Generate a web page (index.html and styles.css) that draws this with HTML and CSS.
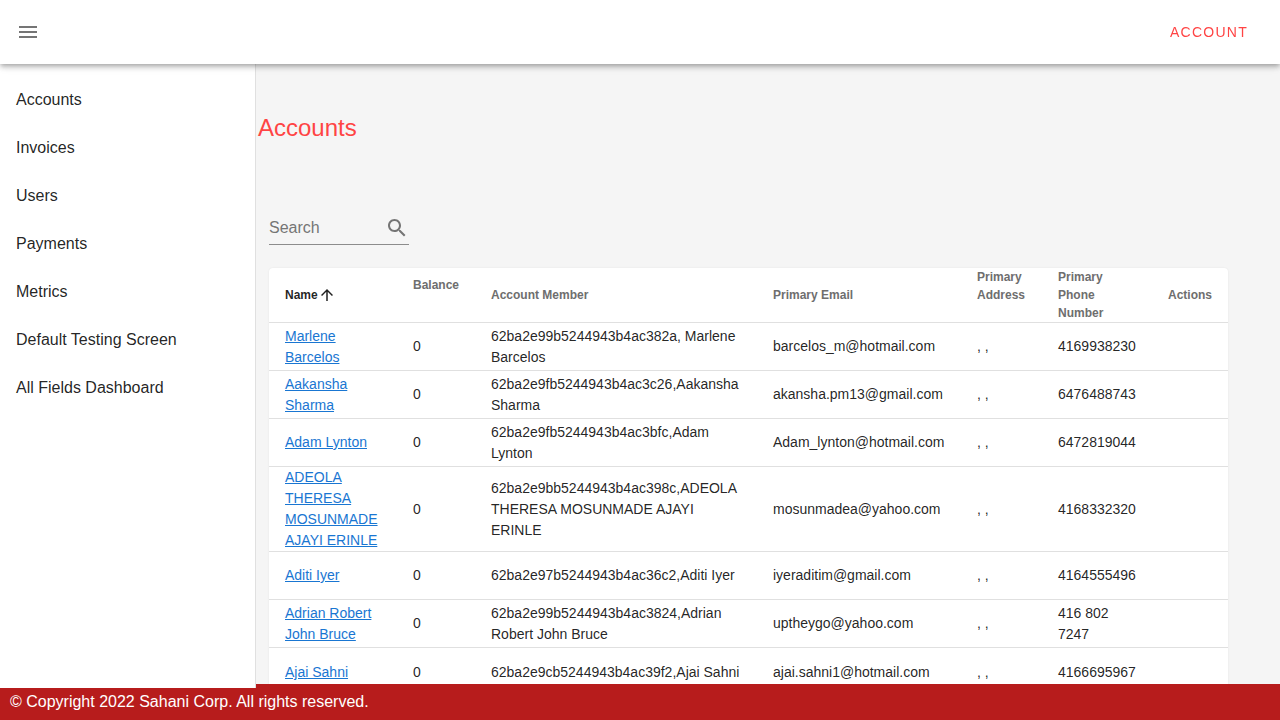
FILE: index.html
```html
<!DOCTYPE html>
<html lang="en">
<head>
<meta charset="utf-8">
<title>Accounts</title>
<link rel="stylesheet" href="styles.css">
</head>
<body>
<header class="appbar">
  <button class="menu-btn" aria-label="menu"><svg viewBox="0 0 24 24" width="24" height="24"><path d="M3 18h18v-2H3v2zm0-5h18v-2H3v2zm0-7v2h18V6H3z"/></svg></button>
  <a class="account-btn">ACCOUNT</a>
</header>
<div class="shell">
  <nav class="drawer">
    <a class="nav-item">Accounts</a>
    <a class="nav-item">Invoices</a>
    <a class="nav-item">Users</a>
    <a class="nav-item">Payments</a>
    <a class="nav-item">Metrics</a>
    <a class="nav-item">Default Testing Screen</a>
    <a class="nav-item">All Fields Dashboard</a>
  </nav>
  <main class="main">
    <h1 class="title">Accounts</h1>
    <div class="search">
      <span class="search-label">Search</span>
      <svg class="search-icon" viewBox="0 0 24 24" width="24" height="24"><path d="M15.5 14h-.79l-.28-.27C15.41 12.59 16 11.11 16 9.5 16 5.91 13.09 3 9.5 3S3 5.91 3 9.5 5.91 16 9.5 16c1.61 0 3.09-.59 4.23-1.57l.27.28v.79l5 4.99L20.49 19l-4.99-5zm-6 0C7.01 14 5 11.99 5 9.5S7.01 5 9.5 5 14 7.01 14 9.5 11.99 14 9.5 14z"/></svg>
    </div>
    <div class="card">
      <table class="grid">
        <colgroup><col class="c-name"><col class="c-bal"><col class="c-mem"><col class="c-email"><col class="c-addr"><col class="c-phone"><col class="c-act"></colgroup>
        <thead>
          <tr>
            <th class="sorted">Name<svg class="sort" viewBox="0 0 24 24" width="18" height="18"><path d="M4 12l1.41 1.41L11 7.83V20h2V7.83l5.58 5.59L20 12l-8-8-8 8z"/></svg></th>
            <th class="raised">Balance</th>
            <th>Account Member</th>
            <th>Primary Email</th>
            <th class="raised-more">Primary Address</th>
            <th>Primary Phone Number</th>
            <th>Actions</th>
          </tr>
        </thead>
        <tbody>
          <tr><td><a>Marlene Barcelos</a></td><td>0</td><td>62ba2e99b5244943b4ac382a, Marlene Barcelos</td><td>barcelos_m@hotmail.com</td><td class="addr">, ,</td><td>4169938230</td><td></td></tr>
          <tr><td><a>Aakansha Sharma</a></td><td>0</td><td>62ba2e9fb5244943b4ac3c26,Aakansha Sharma</td><td>akansha.pm13@gmail.com</td><td class="addr">, ,</td><td>6476488743</td><td></td></tr>
          <tr><td><a>Adam Lynton</a></td><td>0</td><td>62ba2e9fb5244943b4ac3bfc,Adam Lynton</td><td>Adam_lynton@hotmail.com</td><td class="addr">, ,</td><td>6472819044</td><td></td></tr>
          <tr><td><a>ADEOLA THERESA MOSUNMADE AJAYI ERINLE</a></td><td>0</td><td>62ba2e9bb5244943b4ac398c,ADEOLA THERESA MOSUNMADE AJAYI ERINLE</td><td>mosunmadea@yahoo.com</td><td class="addr">, ,</td><td>4168332320</td><td></td></tr>
          <tr><td><a>Aditi Iyer</a></td><td>0</td><td>62ba2e97b5244943b4ac36c2,Aditi Iyer</td><td>iyeraditim@gmail.com</td><td class="addr">, ,</td><td>4164555496</td><td></td></tr>
          <tr><td><a>Adrian Robert John Bruce</a></td><td>0</td><td>62ba2e99b5244943b4ac3824,Adrian Robert John Bruce</td><td>uptheygo@yahoo.com</td><td class="addr">, ,</td><td>416 802 7247</td><td></td></tr>
          <tr class="tall"><td><a>Ajai Sahni</a></td><td>0</td><td>62ba2e9cb5244943b4ac39f2,Ajai Sahni</td><td>ajai.sahni1@hotmail.com</td><td class="addr">, ,</td><td>4166695967</td><td></td></tr>
        </tbody>
      </table>
    </div>
  </main>
</div>
<footer class="footer">© Copyright 2022 Sahani Corp. All rights reserved.</footer>
</body>
</html>
```
FILE: styles.css
```css
* { box-sizing: border-box; }
html, body { margin: 0; height: 100%; overflow: hidden; }
body { font-family: "Liberation Sans", Arial, sans-serif; background: #f5f5f5; color: rgba(0,0,0,.87); }
.appbar { position: relative; z-index: 3; height: 64px; background: #fff; display: flex; align-items: center; justify-content: space-between; padding: 0 32px 0 16px; box-shadow: 0 2px 4px -1px rgba(0,0,0,.2), 0 4px 5px 0 rgba(0,0,0,.14), 0 1px 10px 0 rgba(0,0,0,.12); }
.menu-btn { border: 0; background: none; padding: 0; width: 24px; height: 24px; fill: #757575; display: block; }
.account-btn { font-size: 14px; letter-spacing: 1.25px; color: #ff4444; }
.shell { display: flex; height: 656px; }
.drawer { position: relative; z-index: 2; width: 256px; height: 624px; flex: none; background: #fff; border-right: 1px solid #e0e0e0; padding-top: 12px; }
.nav-item { display: block; height: 48px; line-height: 48px; padding-left: 16px; font-size: 16px; }
.main { flex: 1; min-width: 0; padding: 0 52px 0 13px; }
.title { margin: 47px 0 0 -11px; font-size: 24px; line-height: 34px; font-weight: 400; color: #ff4444; }
.search { margin-top: 66px; width: 140px; height: 34px; border-bottom: 1px solid #8c8c8c; display: flex; align-items: center; justify-content: space-between; }
.search-label { font-size: 16px; color: #757575; }
.search-icon { fill: #757575; }
.card { margin-top: 23px; background: #fff; border-radius: 4px; box-shadow: 0 0 2px rgba(0,0,0,.08); }
.grid { width: 959px; table-layout: fixed; border-collapse: separate; border-spacing: 0; font-size: 14px; line-height: 21px; }
.c-name { width: 128px; } .c-bal { width: 78px; } .c-mem { width: 282px; } .c-email { width: 204px; } .c-addr { width: 81px; } .c-phone { width: 110px; } .c-act { width: 76px; }
th { padding: 0 16px; height: 55px; font-size: 12px; line-height: 18px; font-weight: 700; color: #6e6e6e; text-align: left; border-bottom: 1px solid #e0e0e0; }
th.sorted { color: rgba(0,0,0,.87); white-space: nowrap; }
th.raised { padding-bottom: 20px; }
th.raised-more { padding-bottom: 18px; }
.sort { vertical-align: -5px; fill: rgba(0,0,0,.87); }
td { padding: 0 16px; height: 48px; border-bottom: 1px solid #e0e0e0; }
.tall td { height: 50px; }
td a { color: #1976d2; text-decoration: underline; }
.footer { position: fixed; z-index: 1; left: 0; right: 0; bottom: 0; height: 36px; line-height: 36px; padding-left: 10px; background: #b71c1c; color: #fff; font-size: 16px; }
```
